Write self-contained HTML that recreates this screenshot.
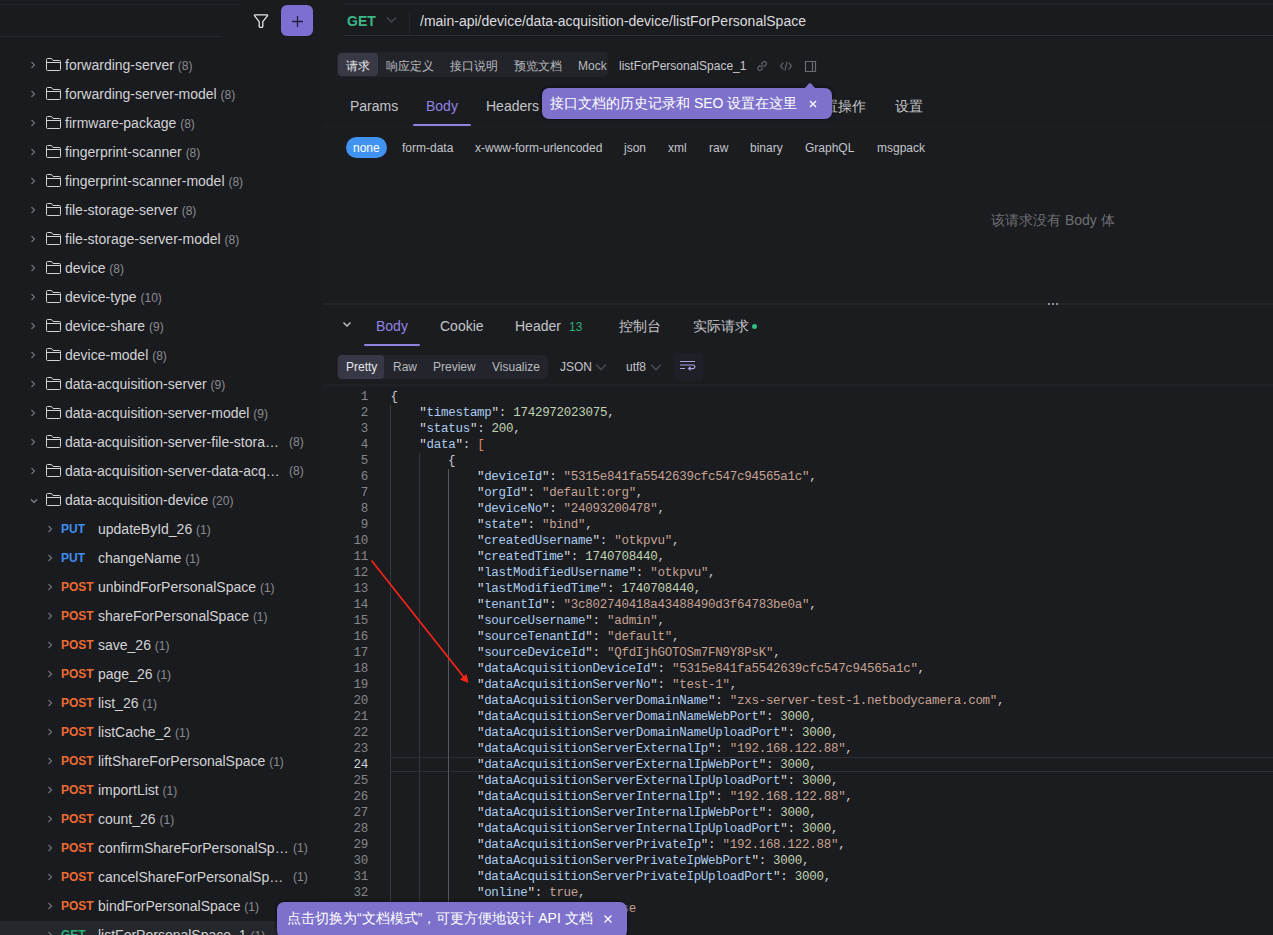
<!DOCTYPE html><html><head><meta charset="utf-8"><style>
*{margin:0;padding:0;box-sizing:border-box}
html,body{width:1273px;height:935px;overflow:hidden;background:#1b1c20;font-family:"Liberation Sans",sans-serif;color:#d6d6d9}
.abs{position:absolute}
#side{position:absolute;left:0;top:0;width:322px;height:935px;background:#1a1b1f}
.row{position:absolute;left:0;width:322px;height:29px;font-size:14px;line-height:29px;white-space:nowrap}
.row .chev{position:absolute;top:10px}
.row .fold{position:absolute;top:7px;left:46px}
.row .t{position:absolute;color:#d3d3d6}
.row .c{color:#8b8c91;font-size:12px}
.m{position:absolute;left:61px;font-weight:bold;font-size:12px}
.put{color:#3f8ff0}
.post{color:#ec6b33}
.get{color:#27b37a}
#main{position:absolute;left:322px;top:0;width:951px;height:935px;background:#1b1c20}
.code{position:absolute;left:322px;top:389px;width:951px;font-family:"Liberation Mono",monospace;font-size:12.5px;line-height:16px;white-space:pre;letter-spacing:-0.277px}
.ln{position:absolute;left:0;width:46px;text-align:right;color:#7d7e84}
.k{color:#abcdf0}
.s{color:#c6a293}
.n{color:#c0d2b0}
.p{color:#c9c9cc}
.qq{color:#d9d9dc}
.b{color:#d88a63}
.tr{color:#c6a293}
</style></head><body>
<div id="side">
<div class="row" style="top:51px"><svg class="chev" style="left:30px" width="6" height="8" viewBox="0 0 6 8"><path d="M1.5 1 L4.5 4 L1.5 7" fill="none" stroke="#707176" stroke-width="1.2"/></svg><svg class="fold" width="15" height="13" viewBox="0 0 15 13"><path d="M0.5 1.5 Q0.5 0.5 1.5 0.5 H5.5 L7 2.5 H13.5 Q14.5 2.5 14.5 3.5 V11.5 Q14.5 12.5 13.5 12.5 H1.5 Q0.5 12.5 0.5 11.5 Z M0.5 4.5 H14.5" fill="none" stroke="#d2d3d6" stroke-width="1"/></svg><span class="t" style="left:65px">forwarding-server <span class="c">(8)</span></span></div>
<div class="row" style="top:80px"><svg class="chev" style="left:30px" width="6" height="8" viewBox="0 0 6 8"><path d="M1.5 1 L4.5 4 L1.5 7" fill="none" stroke="#707176" stroke-width="1.2"/></svg><svg class="fold" width="15" height="13" viewBox="0 0 15 13"><path d="M0.5 1.5 Q0.5 0.5 1.5 0.5 H5.5 L7 2.5 H13.5 Q14.5 2.5 14.5 3.5 V11.5 Q14.5 12.5 13.5 12.5 H1.5 Q0.5 12.5 0.5 11.5 Z M0.5 4.5 H14.5" fill="none" stroke="#d2d3d6" stroke-width="1"/></svg><span class="t" style="left:65px">forwarding-server-model <span class="c">(8)</span></span></div>
<div class="row" style="top:109px"><svg class="chev" style="left:30px" width="6" height="8" viewBox="0 0 6 8"><path d="M1.5 1 L4.5 4 L1.5 7" fill="none" stroke="#707176" stroke-width="1.2"/></svg><svg class="fold" width="15" height="13" viewBox="0 0 15 13"><path d="M0.5 1.5 Q0.5 0.5 1.5 0.5 H5.5 L7 2.5 H13.5 Q14.5 2.5 14.5 3.5 V11.5 Q14.5 12.5 13.5 12.5 H1.5 Q0.5 12.5 0.5 11.5 Z M0.5 4.5 H14.5" fill="none" stroke="#d2d3d6" stroke-width="1"/></svg><span class="t" style="left:65px">firmware-package <span class="c">(8)</span></span></div>
<div class="row" style="top:138px"><svg class="chev" style="left:30px" width="6" height="8" viewBox="0 0 6 8"><path d="M1.5 1 L4.5 4 L1.5 7" fill="none" stroke="#707176" stroke-width="1.2"/></svg><svg class="fold" width="15" height="13" viewBox="0 0 15 13"><path d="M0.5 1.5 Q0.5 0.5 1.5 0.5 H5.5 L7 2.5 H13.5 Q14.5 2.5 14.5 3.5 V11.5 Q14.5 12.5 13.5 12.5 H1.5 Q0.5 12.5 0.5 11.5 Z M0.5 4.5 H14.5" fill="none" stroke="#d2d3d6" stroke-width="1"/></svg><span class="t" style="left:65px">fingerprint-scanner <span class="c">(8)</span></span></div>
<div class="row" style="top:167px"><svg class="chev" style="left:30px" width="6" height="8" viewBox="0 0 6 8"><path d="M1.5 1 L4.5 4 L1.5 7" fill="none" stroke="#707176" stroke-width="1.2"/></svg><svg class="fold" width="15" height="13" viewBox="0 0 15 13"><path d="M0.5 1.5 Q0.5 0.5 1.5 0.5 H5.5 L7 2.5 H13.5 Q14.5 2.5 14.5 3.5 V11.5 Q14.5 12.5 13.5 12.5 H1.5 Q0.5 12.5 0.5 11.5 Z M0.5 4.5 H14.5" fill="none" stroke="#d2d3d6" stroke-width="1"/></svg><span class="t" style="left:65px">fingerprint-scanner-model <span class="c">(8)</span></span></div>
<div class="row" style="top:196px"><svg class="chev" style="left:30px" width="6" height="8" viewBox="0 0 6 8"><path d="M1.5 1 L4.5 4 L1.5 7" fill="none" stroke="#707176" stroke-width="1.2"/></svg><svg class="fold" width="15" height="13" viewBox="0 0 15 13"><path d="M0.5 1.5 Q0.5 0.5 1.5 0.5 H5.5 L7 2.5 H13.5 Q14.5 2.5 14.5 3.5 V11.5 Q14.5 12.5 13.5 12.5 H1.5 Q0.5 12.5 0.5 11.5 Z M0.5 4.5 H14.5" fill="none" stroke="#d2d3d6" stroke-width="1"/></svg><span class="t" style="left:65px">file-storage-server <span class="c">(8)</span></span></div>
<div class="row" style="top:225px"><svg class="chev" style="left:30px" width="6" height="8" viewBox="0 0 6 8"><path d="M1.5 1 L4.5 4 L1.5 7" fill="none" stroke="#707176" stroke-width="1.2"/></svg><svg class="fold" width="15" height="13" viewBox="0 0 15 13"><path d="M0.5 1.5 Q0.5 0.5 1.5 0.5 H5.5 L7 2.5 H13.5 Q14.5 2.5 14.5 3.5 V11.5 Q14.5 12.5 13.5 12.5 H1.5 Q0.5 12.5 0.5 11.5 Z M0.5 4.5 H14.5" fill="none" stroke="#d2d3d6" stroke-width="1"/></svg><span class="t" style="left:65px">file-storage-server-model <span class="c">(8)</span></span></div>
<div class="row" style="top:254px"><svg class="chev" style="left:30px" width="6" height="8" viewBox="0 0 6 8"><path d="M1.5 1 L4.5 4 L1.5 7" fill="none" stroke="#707176" stroke-width="1.2"/></svg><svg class="fold" width="15" height="13" viewBox="0 0 15 13"><path d="M0.5 1.5 Q0.5 0.5 1.5 0.5 H5.5 L7 2.5 H13.5 Q14.5 2.5 14.5 3.5 V11.5 Q14.5 12.5 13.5 12.5 H1.5 Q0.5 12.5 0.5 11.5 Z M0.5 4.5 H14.5" fill="none" stroke="#d2d3d6" stroke-width="1"/></svg><span class="t" style="left:65px">device <span class="c">(8)</span></span></div>
<div class="row" style="top:283px"><svg class="chev" style="left:30px" width="6" height="8" viewBox="0 0 6 8"><path d="M1.5 1 L4.5 4 L1.5 7" fill="none" stroke="#707176" stroke-width="1.2"/></svg><svg class="fold" width="15" height="13" viewBox="0 0 15 13"><path d="M0.5 1.5 Q0.5 0.5 1.5 0.5 H5.5 L7 2.5 H13.5 Q14.5 2.5 14.5 3.5 V11.5 Q14.5 12.5 13.5 12.5 H1.5 Q0.5 12.5 0.5 11.5 Z M0.5 4.5 H14.5" fill="none" stroke="#d2d3d6" stroke-width="1"/></svg><span class="t" style="left:65px">device-type <span class="c">(10)</span></span></div>
<div class="row" style="top:312px"><svg class="chev" style="left:30px" width="6" height="8" viewBox="0 0 6 8"><path d="M1.5 1 L4.5 4 L1.5 7" fill="none" stroke="#707176" stroke-width="1.2"/></svg><svg class="fold" width="15" height="13" viewBox="0 0 15 13"><path d="M0.5 1.5 Q0.5 0.5 1.5 0.5 H5.5 L7 2.5 H13.5 Q14.5 2.5 14.5 3.5 V11.5 Q14.5 12.5 13.5 12.5 H1.5 Q0.5 12.5 0.5 11.5 Z M0.5 4.5 H14.5" fill="none" stroke="#d2d3d6" stroke-width="1"/></svg><span class="t" style="left:65px">device-share <span class="c">(9)</span></span></div>
<div class="row" style="top:341px"><svg class="chev" style="left:30px" width="6" height="8" viewBox="0 0 6 8"><path d="M1.5 1 L4.5 4 L1.5 7" fill="none" stroke="#707176" stroke-width="1.2"/></svg><svg class="fold" width="15" height="13" viewBox="0 0 15 13"><path d="M0.5 1.5 Q0.5 0.5 1.5 0.5 H5.5 L7 2.5 H13.5 Q14.5 2.5 14.5 3.5 V11.5 Q14.5 12.5 13.5 12.5 H1.5 Q0.5 12.5 0.5 11.5 Z M0.5 4.5 H14.5" fill="none" stroke="#d2d3d6" stroke-width="1"/></svg><span class="t" style="left:65px">device-model <span class="c">(8)</span></span></div>
<div class="row" style="top:370px"><svg class="chev" style="left:30px" width="6" height="8" viewBox="0 0 6 8"><path d="M1.5 1 L4.5 4 L1.5 7" fill="none" stroke="#707176" stroke-width="1.2"/></svg><svg class="fold" width="15" height="13" viewBox="0 0 15 13"><path d="M0.5 1.5 Q0.5 0.5 1.5 0.5 H5.5 L7 2.5 H13.5 Q14.5 2.5 14.5 3.5 V11.5 Q14.5 12.5 13.5 12.5 H1.5 Q0.5 12.5 0.5 11.5 Z M0.5 4.5 H14.5" fill="none" stroke="#d2d3d6" stroke-width="1"/></svg><span class="t" style="left:65px">data-acquisition-server <span class="c">(9)</span></span></div>
<div class="row" style="top:399px"><svg class="chev" style="left:30px" width="6" height="8" viewBox="0 0 6 8"><path d="M1.5 1 L4.5 4 L1.5 7" fill="none" stroke="#707176" stroke-width="1.2"/></svg><svg class="fold" width="15" height="13" viewBox="0 0 15 13"><path d="M0.5 1.5 Q0.5 0.5 1.5 0.5 H5.5 L7 2.5 H13.5 Q14.5 2.5 14.5 3.5 V11.5 Q14.5 12.5 13.5 12.5 H1.5 Q0.5 12.5 0.5 11.5 Z M0.5 4.5 H14.5" fill="none" stroke="#d2d3d6" stroke-width="1"/></svg><span class="t" style="left:65px">data-acquisition-server-model <span class="c">(9)</span></span></div>
<div class="row" style="top:428px"><svg class="chev" style="left:30px" width="6" height="8" viewBox="0 0 6 8"><path d="M1.5 1 L4.5 4 L1.5 7" fill="none" stroke="#707176" stroke-width="1.2"/></svg><svg class="fold" width="15" height="13" viewBox="0 0 15 13"><path d="M0.5 1.5 Q0.5 0.5 1.5 0.5 H5.5 L7 2.5 H13.5 Q14.5 2.5 14.5 3.5 V11.5 Q14.5 12.5 13.5 12.5 H1.5 Q0.5 12.5 0.5 11.5 Z M0.5 4.5 H14.5" fill="none" stroke="#d2d3d6" stroke-width="1"/></svg><span class="t" style="left:65px">data-acquisition-server-file-stora…</span><span class="t c" style="left:289px">(8)</span></div>
<div class="row" style="top:457px"><svg class="chev" style="left:30px" width="6" height="8" viewBox="0 0 6 8"><path d="M1.5 1 L4.5 4 L1.5 7" fill="none" stroke="#707176" stroke-width="1.2"/></svg><svg class="fold" width="15" height="13" viewBox="0 0 15 13"><path d="M0.5 1.5 Q0.5 0.5 1.5 0.5 H5.5 L7 2.5 H13.5 Q14.5 2.5 14.5 3.5 V11.5 Q14.5 12.5 13.5 12.5 H1.5 Q0.5 12.5 0.5 11.5 Z M0.5 4.5 H14.5" fill="none" stroke="#d2d3d6" stroke-width="1"/></svg><span class="t" style="left:65px">data-acquisition-server-data-acq…</span><span class="t c" style="left:289px">(8)</span></div>
<div class="row" style="top:486px"><svg class="chev" style="left:30px;top:12px" width="8" height="6" viewBox="0 0 8 6"><path d="M1 1.5 L4 4.5 L7 1.5" fill="none" stroke="#86878c" stroke-width="1.2"/></svg><svg class="fold" width="15" height="13" viewBox="0 0 15 13"><path d="M0.5 1.5 Q0.5 0.5 1.5 0.5 H5.5 L7 2.5 H13.5 Q14.5 2.5 14.5 3.5 V11.5 Q14.5 12.5 13.5 12.5 H1.5 Q0.5 12.5 0.5 11.5 Z M0.5 4.5 H14.5" fill="none" stroke="#d2d3d6" stroke-width="1"/></svg><span class="t" style="left:65px">data-acquisition-device <span class="c">(20)</span></span></div>
<div class="row" style="top:515px;"><svg class="chev" style="left:47px" width="6" height="8" viewBox="0 0 6 8"><path d="M1.5 1 L4.5 4 L1.5 7" fill="none" stroke="#707176" stroke-width="1.2"/></svg><span class="m put">PUT</span><span class="t" style="left:98px">updateById_26 <span class="c">(1)</span></span></div>
<div class="row" style="top:544px;"><svg class="chev" style="left:47px" width="6" height="8" viewBox="0 0 6 8"><path d="M1.5 1 L4.5 4 L1.5 7" fill="none" stroke="#707176" stroke-width="1.2"/></svg><span class="m put">PUT</span><span class="t" style="left:98px">changeName <span class="c">(1)</span></span></div>
<div class="row" style="top:573px;"><svg class="chev" style="left:47px" width="6" height="8" viewBox="0 0 6 8"><path d="M1.5 1 L4.5 4 L1.5 7" fill="none" stroke="#707176" stroke-width="1.2"/></svg><span class="m post">POST</span><span class="t" style="left:98px">unbindForPersonalSpace <span class="c">(1)</span></span></div>
<div class="row" style="top:602px;"><svg class="chev" style="left:47px" width="6" height="8" viewBox="0 0 6 8"><path d="M1.5 1 L4.5 4 L1.5 7" fill="none" stroke="#707176" stroke-width="1.2"/></svg><span class="m post">POST</span><span class="t" style="left:98px">shareForPersonalSpace <span class="c">(1)</span></span></div>
<div class="row" style="top:631px;"><svg class="chev" style="left:47px" width="6" height="8" viewBox="0 0 6 8"><path d="M1.5 1 L4.5 4 L1.5 7" fill="none" stroke="#707176" stroke-width="1.2"/></svg><span class="m post">POST</span><span class="t" style="left:98px">save_26 <span class="c">(1)</span></span></div>
<div class="row" style="top:660px;"><svg class="chev" style="left:47px" width="6" height="8" viewBox="0 0 6 8"><path d="M1.5 1 L4.5 4 L1.5 7" fill="none" stroke="#707176" stroke-width="1.2"/></svg><span class="m post">POST</span><span class="t" style="left:98px">page_26 <span class="c">(1)</span></span></div>
<div class="row" style="top:689px;"><svg class="chev" style="left:47px" width="6" height="8" viewBox="0 0 6 8"><path d="M1.5 1 L4.5 4 L1.5 7" fill="none" stroke="#707176" stroke-width="1.2"/></svg><span class="m post">POST</span><span class="t" style="left:98px">list_26 <span class="c">(1)</span></span></div>
<div class="row" style="top:718px;"><svg class="chev" style="left:47px" width="6" height="8" viewBox="0 0 6 8"><path d="M1.5 1 L4.5 4 L1.5 7" fill="none" stroke="#707176" stroke-width="1.2"/></svg><span class="m post">POST</span><span class="t" style="left:98px">listCache_2 <span class="c">(1)</span></span></div>
<div class="row" style="top:747px;"><svg class="chev" style="left:47px" width="6" height="8" viewBox="0 0 6 8"><path d="M1.5 1 L4.5 4 L1.5 7" fill="none" stroke="#707176" stroke-width="1.2"/></svg><span class="m post">POST</span><span class="t" style="left:98px">liftShareForPersonalSpace <span class="c">(1)</span></span></div>
<div class="row" style="top:776px;"><svg class="chev" style="left:47px" width="6" height="8" viewBox="0 0 6 8"><path d="M1.5 1 L4.5 4 L1.5 7" fill="none" stroke="#707176" stroke-width="1.2"/></svg><span class="m post">POST</span><span class="t" style="left:98px">importList <span class="c">(1)</span></span></div>
<div class="row" style="top:805px;"><svg class="chev" style="left:47px" width="6" height="8" viewBox="0 0 6 8"><path d="M1.5 1 L4.5 4 L1.5 7" fill="none" stroke="#707176" stroke-width="1.2"/></svg><span class="m post">POST</span><span class="t" style="left:98px">count_26 <span class="c">(1)</span></span></div>
<div class="row" style="top:834px;"><svg class="chev" style="left:47px" width="6" height="8" viewBox="0 0 6 8"><path d="M1.5 1 L4.5 4 L1.5 7" fill="none" stroke="#707176" stroke-width="1.2"/></svg><span class="m post">POST</span><span class="t" style="left:98px">confirmShareForPersonalSp…</span><span class="t c" style="left:293px">(1)</span></div>
<div class="row" style="top:863px;"><svg class="chev" style="left:47px" width="6" height="8" viewBox="0 0 6 8"><path d="M1.5 1 L4.5 4 L1.5 7" fill="none" stroke="#707176" stroke-width="1.2"/></svg><span class="m post">POST</span><span class="t" style="left:98px">cancelShareForPersonalSp…</span><span class="t c" style="left:293px">(1)</span></div>
<div class="row" style="top:892px;"><svg class="chev" style="left:47px" width="6" height="8" viewBox="0 0 6 8"><path d="M1.5 1 L4.5 4 L1.5 7" fill="none" stroke="#707176" stroke-width="1.2"/></svg><span class="m post">POST</span><span class="t" style="left:98px">bindForPersonalSpace <span class="c">(1)</span></span></div>
<div class="row" style="top:921px;background:#26272c;"><svg class="chev" style="left:47px" width="6" height="8" viewBox="0 0 6 8"><path d="M1.5 1 L4.5 4 L1.5 7" fill="none" stroke="#707176" stroke-width="1.2"/></svg><span class="m get">GET</span><span class="t" style="left:98px">listForPersonalSpace_1 <span class="c">(1)</span></span></div>
<svg class="abs" style="left:253px;top:13px" width="16" height="16" viewBox="0 0 16 16"><path d="M2 1.8 H14 Q15 1.8 14.4 2.8 L9.8 8.6 V13.6 Q9.8 14.4 9 14.4 H7 Q6.2 14.4 6.2 13.6 V8.6 L1.6 2.8 Q1 1.8 2 1.8 Z" fill="none" stroke="#e6e6e9" stroke-width="1.3" stroke-linejoin="round"/></svg>
<div class="abs" style="left:281px;top:5px;width:32px;height:31px;border-radius:6px;background:#7c6fd2"></div>
<svg class="abs" style="left:291px;top:15px" width="13" height="13" viewBox="0 0 13 13"><path d="M6.5 1 V12 M1 6.5 H12" stroke="#23203a" stroke-width="1.3"/></svg>
</div>
<div id="main">
</div>
<div class="abs" style="left:0;top:4px;width:240px;height:1px;background:#24252a"></div>
<div class="abs" style="left:0;top:36px;width:222px;height:1px;background:#26272c"></div>
<div class="abs" style="left:344px;top:3px;width:929px;height:35px;border-top:2px solid #212227;border-bottom:2px solid #17181c;box-shadow:inset 0 -1px 0 #2c2d32;background:#1a1b1f"></div>
<div class="abs" style="left:347px;top:12px;font-size:14px;font-weight:bold;color:#3cb886;line-height:18px">GET</div>
<svg class="abs" style="left:386px;top:16px" width="11" height="8" viewBox="0 0 11 8"><path d="M1 1.5 L5.5 6 L10 1.5" fill="none" stroke="#46474c" stroke-width="1.5"/></svg>
<div class="abs" style="left:409px;top:12px;width:1px;height:22px;background:#26272c"></div>
<div class="abs" style="left:420px;top:12px;font-size:14px;color:#dcdcdf;line-height:18px">/main-api/device/data-acquisition-device/listForPersonalSpace</div>
<div class="abs" style="left:337px;top:52px;width:271px;height:25px;border-radius:5px;background:#23242a"></div>
<div class="abs" style="left:338px;top:53px;width:40px;height:23px;border-radius:4px;background:#383944"></div>
<div class="abs" style="left:346px;top:58px;font-size:12px;line-height:16px;color:#e6e6e9">请求</div>
<div class="abs" style="left:386px;top:58px;font-size:12px;line-height:16px;color:#b9babe">响应定义</div>
<div class="abs" style="left:450px;top:58px;font-size:12px;line-height:16px;color:#b9babe">接口说明</div>
<div class="abs" style="left:514px;top:58px;font-size:12px;line-height:16px;color:#b9babe">预览文档</div>
<div class="abs" style="left:578px;top:58px;font-size:12px;line-height:16px;color:#b9babe">Mock</div>
<div class="abs" style="left:619px;top:58px;font-size:12px;line-height:16px;color:#c9c9cd">listForPersonalSpace_1</div>
<svg class="abs" style="left:755px;top:59px" width="14" height="14" viewBox="0 0 14 14"><path d="M6 8 L8 6 M5 6.5 L3.2 8.3 a2 2 0 0 0 2.8 2.8 L7.5 9.3 M6.5 4.7 L8.3 3 a2 2 0 0 1 2.8 2.8 L9.3 7.5" fill="none" stroke="#5c5d62" stroke-width="1.3" stroke-linecap="round"/></svg>
<svg class="abs" style="left:779px;top:59px" width="14" height="14" viewBox="0 0 14 14"><path d="M4 4 L1.5 7 L4 10 M10 4 L12.5 7 L10 10 M8 3 L6 11" fill="none" stroke="#5c5d62" stroke-width="1.2" stroke-linecap="round"/></svg>
<svg class="abs" style="left:803px;top:59px" width="14" height="14" viewBox="0 0 14 14"><path d="M2.5 2.5 H12.5 V12.5 H2.5 Z M9.5 2.5 V12.5" fill="none" stroke="#6a6b70" stroke-width="1.2"/></svg>
<div class="abs" style="left:350px;top:97px;font-size:14px;line-height:18px;color:#c4c5c9">Params</div>
<div class="abs" style="left:426px;top:97px;font-size:14px;line-height:18px;color:#8f83e0">Body</div>
<div class="abs" style="left:486px;top:97px;font-size:14px;line-height:18px;color:#c4c5c9">Headers</div>
<div class="abs" style="left:810px;top:97px;font-size:14px;line-height:18px;color:#c4c5c9">前置操作</div>
<div class="abs" style="left:895px;top:97px;font-size:14px;line-height:18px;color:#c4c5c9">设置</div>
<div class="abs" style="left:413px;top:124px;width:58px;height:2px;background:#8f83e0;border-radius:1px"></div>
<div class="abs" style="left:322px;top:126px;width:951px;height:1px;background:#1f2024"></div>
<div class="abs" style="left:346px;top:137px;width:41px;height:21px;border-radius:11px;background:#4193f2"></div>
<div class="abs" style="left:353px;top:140px;font-size:12px;line-height:16px;color:#ffffff">none</div>
<div class="abs" style="left:402px;top:140px;font-size:12px;line-height:16px;color:#c4c5c9">form-data</div>
<div class="abs" style="left:475px;top:140px;font-size:12px;line-height:16px;color:#c4c5c9">x-www-form-urlencoded</div>
<div class="abs" style="left:624px;top:140px;font-size:12px;line-height:16px;color:#c4c5c9">json</div>
<div class="abs" style="left:668px;top:140px;font-size:12px;line-height:16px;color:#c4c5c9">xml</div>
<div class="abs" style="left:709px;top:140px;font-size:12px;line-height:16px;color:#c4c5c9">raw</div>
<div class="abs" style="left:750px;top:140px;font-size:12px;line-height:16px;color:#c4c5c9">binary</div>
<div class="abs" style="left:805px;top:140px;font-size:12px;line-height:16px;color:#c4c5c9">GraphQL</div>
<div class="abs" style="left:877px;top:140px;font-size:12px;line-height:16px;color:#c4c5c9">msgpack</div>
<div class="abs" style="left:991px;top:211px;font-size:14px;line-height:18px;color:#6e6f74">该请求没有 Body 体</div>
<div class="abs" style="left:322px;top:303px;width:951px;height:2px;background:#25262a"></div>
<div class="abs" style="left:1048px;top:303px;width:2px;height:2px;background:#8e8f94"></div><div class="abs" style="left:1052px;top:303px;width:2px;height:2px;background:#8e8f94"></div><div class="abs" style="left:1056px;top:303px;width:2px;height:2px;background:#8e8f94"></div>
<svg class="abs" style="left:342px;top:321px" width="10" height="7" viewBox="0 0 10 7"><path d="M1.5 1.5 L5 5 L8.5 1.5" fill="none" stroke="#c4c5c9" stroke-width="1.4"/></svg>
<div class="abs" style="left:376px;top:317px;font-size:14px;line-height:18px;color:#8f83e0">Body</div>
<div class="abs" style="left:440px;top:317px;font-size:14px;line-height:18px;color:#c4c5c9">Cookie</div>
<div class="abs" style="left:515px;top:317px;font-size:14px;line-height:18px;color:#c4c5c9">Header</div>
<div class="abs" style="left:619px;top:317px;font-size:14px;line-height:18px;color:#c4c5c9">控制台</div>
<div class="abs" style="left:693px;top:317px;font-size:14px;line-height:18px;color:#c4c5c9">实际请求</div>
<div class="abs" style="left:569px;top:319px;font-size:12px;line-height:16px;color:#2fae7a">13</div>
<div class="abs" style="left:752px;top:324px;width:5px;height:5px;border-radius:50%;background:#2fbf7e"></div>
<div class="abs" style="left:364px;top:344px;width:56px;height:2px;background:#8f83e0;border-radius:1px"></div>
<div class="abs" style="left:337px;top:355px;width:211px;height:24px;border-radius:5px;background:#24252c"></div>
<div class="abs" style="left:338px;top:355px;width:46px;height:24px;border-radius:4px;background:#373846"></div>
<div class="abs" style="left:346px;top:359px;font-size:12px;line-height:16px;color:#e6e6e9">Pretty</div>
<div class="abs" style="left:393px;top:359px;font-size:12px;line-height:16px;color:#b9babe">Raw</div>
<div class="abs" style="left:433px;top:359px;font-size:12px;line-height:16px;color:#b9babe">Preview</div>
<div class="abs" style="left:492px;top:359px;font-size:12px;line-height:16px;color:#b9babe">Visualize</div>
<div class="abs" style="left:560px;top:359px;font-size:12px;line-height:16px;color:#c4c5c9">JSON</div>
<div class="abs" style="left:626px;top:359px;font-size:12px;line-height:16px;color:#c4c5c9">utf8</div>
<svg class="abs" style="left:595px;top:363px" width="12" height="8" viewBox="0 0 12 8"><path d="M1 1.5 L6 6.5 L11 1.5" fill="none" stroke="#48494f" stroke-width="1.6"/></svg>
<svg class="abs" style="left:650px;top:363px" width="12" height="8" viewBox="0 0 12 8"><path d="M1 1.5 L6 6.5 L11 1.5" fill="none" stroke="#48494f" stroke-width="1.6"/></svg>
<div class="abs" style="left:674px;top:353px;width:29px;height:28px;border-radius:4px;background:#1f1f28"></div>
<svg class="abs" style="left:679px;top:358px" width="18" height="14" viewBox="0 0 18 14"><path d="M1 3.5 H16 M1 7 H14 a1.8 1.8 0 0 1 0 3.6 H10 M1 10.5 H6" fill="none" stroke="#aaa6e0" stroke-width="1.2"/><path d="M11.5 8.8 L9.6 10.6 L11.5 12.4" fill="none" stroke="#aaa6e0" stroke-width="1.2"/></svg>
<div class="abs" style="left:322px;top:384px;width:951px;height:3px;background:#1f2025"></div>
<div class="abs" style="left:391px;top:757px;width:882px;height:15px;border-top:1px solid #2d2e33;border-bottom:1px solid #2d2e33"></div>
<div class="abs" style="left:390px;top:405px;width:1px;height:530px;background:#36373c"></div>
<div class="abs" style="left:419px;top:453px;width:1px;height:482px;background:#36373c"></div>
<div class="abs" style="left:448px;top:469px;width:1px;height:466px;background:#56575c"></div>
<div class="code">
<div class="ln" style="top:0px;left:0;width:46px;color:#85868b">1</div>
<div style="position:absolute;top:0px;left:68.5px"><span class="p">{</span></div>
<div class="ln" style="top:16px;left:0;width:46px;color:#85868b">2</div>
<div style="position:absolute;top:16px;left:97.3px"><span class="qq">"</span><span class="k">timestamp</span><span class="qq">"</span><span class="p">: </span><span class="n">1742972023075</span><span class="p">,</span></div>
<div class="ln" style="top:32px;left:0;width:46px;color:#85868b">3</div>
<div style="position:absolute;top:32px;left:97.3px"><span class="qq">"</span><span class="k">status</span><span class="qq">"</span><span class="p">: </span><span class="n">200</span><span class="p">,</span></div>
<div class="ln" style="top:48px;left:0;width:46px;color:#85868b">4</div>
<div style="position:absolute;top:48px;left:97.3px"><span class="qq">"</span><span class="k">data</span><span class="qq">"</span><span class="p">: </span><span class="b">[</span></div>
<div class="ln" style="top:64px;left:0;width:46px;color:#85868b">5</div>
<div style="position:absolute;top:64px;left:126.1px"><span class="p">{</span></div>
<div class="ln" style="top:80px;left:0;width:46px;color:#85868b">6</div>
<div style="position:absolute;top:80px;left:154.9px"><span class="qq">"</span><span class="k">deviceId</span><span class="qq">"</span><span class="p">: </span><span class="s">&quot;5315e841fa5542639cfc547c94565a1c&quot;</span><span class="p">,</span></div>
<div class="ln" style="top:96px;left:0;width:46px;color:#85868b">7</div>
<div style="position:absolute;top:96px;left:154.9px"><span class="qq">"</span><span class="k">orgId</span><span class="qq">"</span><span class="p">: </span><span class="s">&quot;default:org&quot;</span><span class="p">,</span></div>
<div class="ln" style="top:112px;left:0;width:46px;color:#85868b">8</div>
<div style="position:absolute;top:112px;left:154.9px"><span class="qq">"</span><span class="k">deviceNo</span><span class="qq">"</span><span class="p">: </span><span class="s">&quot;24093200478&quot;</span><span class="p">,</span></div>
<div class="ln" style="top:128px;left:0;width:46px;color:#85868b">9</div>
<div style="position:absolute;top:128px;left:154.9px"><span class="qq">"</span><span class="k">state</span><span class="qq">"</span><span class="p">: </span><span class="s">&quot;bind&quot;</span><span class="p">,</span></div>
<div class="ln" style="top:144px;left:0;width:46px;color:#85868b">10</div>
<div style="position:absolute;top:144px;left:154.9px"><span class="qq">"</span><span class="k">createdUsername</span><span class="qq">"</span><span class="p">: </span><span class="s">&quot;otkpvu&quot;</span><span class="p">,</span></div>
<div class="ln" style="top:160px;left:0;width:46px;color:#85868b">11</div>
<div style="position:absolute;top:160px;left:154.9px"><span class="qq">"</span><span class="k">createdTime</span><span class="qq">"</span><span class="p">: </span><span class="n">1740708440</span><span class="p">,</span></div>
<div class="ln" style="top:176px;left:0;width:46px;color:#85868b">12</div>
<div style="position:absolute;top:176px;left:154.9px"><span class="qq">"</span><span class="k">lastModifiedUsername</span><span class="qq">"</span><span class="p">: </span><span class="s">&quot;otkpvu&quot;</span><span class="p">,</span></div>
<div class="ln" style="top:192px;left:0;width:46px;color:#85868b">13</div>
<div style="position:absolute;top:192px;left:154.9px"><span class="qq">"</span><span class="k">lastModifiedTime</span><span class="qq">"</span><span class="p">: </span><span class="n">1740708440</span><span class="p">,</span></div>
<div class="ln" style="top:208px;left:0;width:46px;color:#85868b">14</div>
<div style="position:absolute;top:208px;left:154.9px"><span class="qq">"</span><span class="k">tenantId</span><span class="qq">"</span><span class="p">: </span><span class="s">&quot;3c802740418a43488490d3f64783be0a&quot;</span><span class="p">,</span></div>
<div class="ln" style="top:224px;left:0;width:46px;color:#85868b">15</div>
<div style="position:absolute;top:224px;left:154.9px"><span class="qq">"</span><span class="k">sourceUsername</span><span class="qq">"</span><span class="p">: </span><span class="s">&quot;admin&quot;</span><span class="p">,</span></div>
<div class="ln" style="top:240px;left:0;width:46px;color:#85868b">16</div>
<div style="position:absolute;top:240px;left:154.9px"><span class="qq">"</span><span class="k">sourceTenantId</span><span class="qq">"</span><span class="p">: </span><span class="s">&quot;default&quot;</span><span class="p">,</span></div>
<div class="ln" style="top:256px;left:0;width:46px;color:#85868b">17</div>
<div style="position:absolute;top:256px;left:154.9px"><span class="qq">"</span><span class="k">sourceDeviceId</span><span class="qq">"</span><span class="p">: </span><span class="s">&quot;QfdIjhGOTOSm7FN9Y8PsK&quot;</span><span class="p">,</span></div>
<div class="ln" style="top:272px;left:0;width:46px;color:#85868b">18</div>
<div style="position:absolute;top:272px;left:154.9px"><span class="qq">"</span><span class="k">dataAcquisitionDeviceId</span><span class="qq">"</span><span class="p">: </span><span class="s">&quot;5315e841fa5542639cfc547c94565a1c&quot;</span><span class="p">,</span></div>
<div class="ln" style="top:288px;left:0;width:46px;color:#85868b">19</div>
<div style="position:absolute;top:288px;left:154.9px"><span class="qq">"</span><span class="k">dataAcquisitionServerNo</span><span class="qq">"</span><span class="p">: </span><span class="s">&quot;test-1&quot;</span><span class="p">,</span></div>
<div class="ln" style="top:304px;left:0;width:46px;color:#85868b">20</div>
<div style="position:absolute;top:304px;left:154.9px"><span class="qq">"</span><span class="k">dataAcquisitionServerDomainName</span><span class="qq">"</span><span class="p">: </span><span class="s">&quot;zxs-server-test-1.netbodycamera.com&quot;</span><span class="p">,</span></div>
<div class="ln" style="top:320px;left:0;width:46px;color:#85868b">21</div>
<div style="position:absolute;top:320px;left:154.9px"><span class="qq">"</span><span class="k">dataAcquisitionServerDomainNameWebPort</span><span class="qq">"</span><span class="p">: </span><span class="n">3000</span><span class="p">,</span></div>
<div class="ln" style="top:336px;left:0;width:46px;color:#85868b">22</div>
<div style="position:absolute;top:336px;left:154.9px"><span class="qq">"</span><span class="k">dataAcquisitionServerDomainNameUploadPort</span><span class="qq">"</span><span class="p">: </span><span class="n">3000</span><span class="p">,</span></div>
<div class="ln" style="top:352px;left:0;width:46px;color:#85868b">23</div>
<div style="position:absolute;top:352px;left:154.9px"><span class="qq">"</span><span class="k">dataAcquisitionServerExternalIp</span><span class="qq">"</span><span class="p">: </span><span class="s">&quot;192.168.122.88&quot;</span><span class="p">,</span></div>
<div class="ln" style="top:368px;left:0;width:46px;color:#d0d0d4">24</div>
<div style="position:absolute;top:368px;left:154.9px"><span class="qq">"</span><span class="k">dataAcquisitionServerExternalIpWebPort</span><span class="qq">"</span><span class="p">: </span><span class="n">3000</span><span class="p">,</span></div>
<div class="ln" style="top:384px;left:0;width:46px;color:#85868b">25</div>
<div style="position:absolute;top:384px;left:154.9px"><span class="qq">"</span><span class="k">dataAcquisitionServerExternalIpUploadPort</span><span class="qq">"</span><span class="p">: </span><span class="n">3000</span><span class="p">,</span></div>
<div class="ln" style="top:400px;left:0;width:46px;color:#85868b">26</div>
<div style="position:absolute;top:400px;left:154.9px"><span class="qq">"</span><span class="k">dataAcquisitionServerInternalIp</span><span class="qq">"</span><span class="p">: </span><span class="s">&quot;192.168.122.88&quot;</span><span class="p">,</span></div>
<div class="ln" style="top:416px;left:0;width:46px;color:#85868b">27</div>
<div style="position:absolute;top:416px;left:154.9px"><span class="qq">"</span><span class="k">dataAcquisitionServerInternalIpWebPort</span><span class="qq">"</span><span class="p">: </span><span class="n">3000</span><span class="p">,</span></div>
<div class="ln" style="top:432px;left:0;width:46px;color:#85868b">28</div>
<div style="position:absolute;top:432px;left:154.9px"><span class="qq">"</span><span class="k">dataAcquisitionServerInternalIpUploadPort</span><span class="qq">"</span><span class="p">: </span><span class="n">3000</span><span class="p">,</span></div>
<div class="ln" style="top:448px;left:0;width:46px;color:#85868b">29</div>
<div style="position:absolute;top:448px;left:154.9px"><span class="qq">"</span><span class="k">dataAcquisitionServerPrivateIp</span><span class="qq">"</span><span class="p">: </span><span class="s">&quot;192.168.122.88&quot;</span><span class="p">,</span></div>
<div class="ln" style="top:464px;left:0;width:46px;color:#85868b">30</div>
<div style="position:absolute;top:464px;left:154.9px"><span class="qq">"</span><span class="k">dataAcquisitionServerPrivateIpWebPort</span><span class="qq">"</span><span class="p">: </span><span class="n">3000</span><span class="p">,</span></div>
<div class="ln" style="top:480px;left:0;width:46px;color:#85868b">31</div>
<div style="position:absolute;top:480px;left:154.9px"><span class="qq">"</span><span class="k">dataAcquisitionServerPrivateIpUploadPort</span><span class="qq">"</span><span class="p">: </span><span class="n">3000</span><span class="p">,</span></div>
<div class="ln" style="top:496px;left:0;width:46px;color:#85868b">32</div>
<div style="position:absolute;top:496px;left:154.9px"><span class="qq">"</span><span class="k">online</span><span class="qq">"</span><span class="p">: </span><span class="tr">true</span><span class="p">,</span></div>
<div class="ln" style="top:512px;left:0;width:46px;color:#85868b">33</div>
<div style="position:absolute;top:512px;left:154.9px"><span class="qq">"</span><span class="k">ownerIsShared</span><span class="qq">"</span><span class="p">: </span><span class="tr">false</span></div>
</div>
<svg class="abs" style="left:0;top:0" width="1273" height="935" viewBox="0 0 1273 935"><path d="M371.5 560.5 L464.5 678" stroke="#fa2418" stroke-width="1.7" fill="none"/><path d="M468.5 683 L466.5 674 L460 679.5 Z" fill="#fa2418"/></svg>
<div class="abs" style="left:542px;top:88px;width:290px;height:31px;border-radius:7px;background:#7d71cc;box-shadow:0 0 3px 1px rgba(10,8,20,0.6)"></div>
<svg class="abs" style="left:803px;top:82px" width="14" height="7" viewBox="0 0 14 7"><path d="M1 7 L6 1.5 Q7 0.5 8 1.5 L13 7 Z" fill="#7d71cc"/></svg>
<div class="abs" style="left:550px;top:94px;font-size:14px;line-height:18px;color:#ffffff;white-space:nowrap">接口文档的历史记录和 SEO 设置在这里</div>
<svg class="abs" style="left:809px;top:100px" width="8" height="8" viewBox="0 0 8 8"><path d="M1 1 L7 7 M7 1 L1 7" stroke="#ffffff" stroke-width="1.3"/></svg>
<div class="abs" style="left:277px;top:902px;width:350px;height:36px;border-radius:7px;background:#7d71cc;box-shadow:0 0 3px 1px rgba(10,8,20,0.6)"></div>
<div class="abs" style="left:287px;top:909px;font-size:14px;line-height:18px;color:#ffffff;white-space:nowrap">点击切换为“文档模式”，可更方便地设计 API 文档</div>
<svg class="abs" style="left:603px;top:914px" width="10" height="10" viewBox="0 0 10 10"><path d="M1.5 1.5 L8.5 8.5 M8.5 1.5 L1.5 8.5" stroke="#ffffff" stroke-width="1.3"/></svg>
</body></html>
